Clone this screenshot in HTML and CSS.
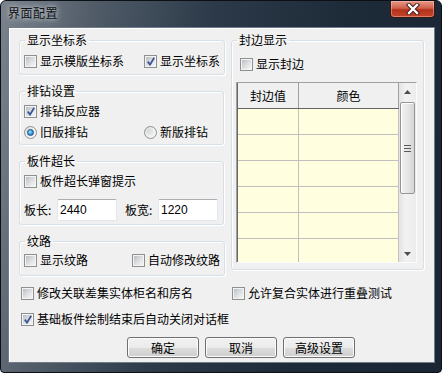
FILE: index.html
```html
<!DOCTYPE html>
<html lang="zh">

<head>
    <meta charset="UTF-8">
    <title>界面配置</title>
    <link rel="stylesheet" href="styles.css">
</head>

<body>
    <div class="window">
        <div class="titlebar">
            <span class="title">界面配置</span>
            <div class="close">
                <svg width="18" height="12" viewBox="0 0 18 12">
                    <path d="M5 2 L13 10 M13 2 L5 10" stroke="#3a1410" stroke-width="4.2" stroke-linecap="square" fill="none"/>
                    <path d="M5 2 L13 10 M13 2 L5 10" stroke="#fff" stroke-width="2.4" stroke-linecap="square" fill="none"/>
                </svg>
            </div>
        </div>
        <div class="client">
            <div class="main">
                <div class="left">
                    <fieldset class="group g1">
                        <legend>显示坐标系</legend>
                        <div class="row">
                            <label class="check w120"><span class="box"></span>显示模版坐标系</label>
                            <label class="check"><span class="box on"></span>显示坐标系</label>
                        </div>
                    </fieldset>
                    <fieldset class="group g2">
                        <legend>排钻设置</legend>
                        <div class="row">
                            <label class="check"><span class="box on"></span>排钻反应器</label>
                        </div>
                        <div class="row">
                            <label class="check w120"><span class="radio on"></span>旧版排钻</label>
                            <label class="check"><span class="radio"></span>新版排钻</label>
                        </div>
                    </fieldset>
                    <fieldset class="group g3">
                        <legend>板件超长</legend>
                        <div class="row">
                            <label class="check"><span class="box"></span>板件超长弹窗提示</label>
                        </div>
                        <div class="size-row">
                            <span class="size-label">板长:</span>
                            <input type="text" class="size" value="2440">
                            <span class="size-label">板宽:</span>
                            <input type="text" class="size" value="1220">
                        </div>
                    </fieldset>
                    <fieldset class="group g4">
                        <legend>纹路</legend>
                        <div class="row">
                            <label class="check w108"><span class="box"></span>显示纹路</label>
                            <label class="check"><span class="box"></span>自动修改纹路</label>
                        </div>
                    </fieldset>
                </div>
                <fieldset class="group edge">
                    <legend>封边显示</legend>
                    <div class="row edge-check">
                        <label class="check"><span class="box"></span>显示封边</label>
                    </div>
                    <div class="grid">
                        <div class="grid-body">
                            <table>
                                <thead>
                                    <tr>
                                        <th class="c1">封边值</th>
                                        <th class="c2">颜色</th>
                                    </tr>
                                </thead>
                                <tbody>
                                    <tr><td></td><td></td></tr>
                                    <tr><td></td><td></td></tr>
                                    <tr><td></td><td></td></tr>
                                    <tr><td></td><td></td></tr>
                                    <tr><td></td><td></td></tr>
                                    <tr><td></td><td></td></tr>
                                </tbody>
                            </table>
                        </div>
                        <div class="scrollbar">
                            <div class="arrow up"><svg width="7" height="4" viewBox="0 0 7 4"><path d="M0 4 L3.5 0 L7 4 Z" fill="#4d4d4d"/></svg></div>
                            <div class="track">
                                <div class="thumb"><span class="grip"></span></div>
                            </div>
                            <div class="arrow down"><svg width="7" height="4" viewBox="0 0 7 4"><path d="M0 0 L3.5 4 L7 0 Z" fill="#4d4d4d"/></svg></div>
                        </div>
                    </div>
                </fieldset>
            </div>
            <div class="options">
                <div class="row">
                    <label class="check w211"><span class="box"></span>修改关联差集实体柜名和房名</label>
                    <label class="check"><span class="box"></span>允许复合实体进行重叠测试</label>
                </div>
                <div class="row">
                    <label class="check"><span class="box on"></span>基础板件绘制结束后自动关闭对话框</label>
                </div>
            </div>
            <div class="buttons">
                <button class="btn">确定</button>
                <button class="btn">取消</button>
                <button class="btn">高级设置</button>
            </div>
        </div>
    </div>
</body>

</html>
```

FILE: styles.css
```css
* {
    padding: 0;
    margin: 0;
}

body {
    width: 442px;
    height: 373px;
    overflow: hidden;
    background: #fff;
    font-family: "Liberation Sans", "Noto Sans CJK SC", sans-serif;
    font-size: 12px;
    color: #000;
}

.window {
    width: 442px;
    height: 373px;
    box-sizing: border-box;
    border: 1px solid #0b1016;
    border-radius: 6px 6px 4px 4px;
    background: linear-gradient(100deg, #7a838d 0%, #525d69 18%, #2c3a49 42%, #1d2a38 70%, #1b2634 100%);
    display: flex;
    flex-direction: column;
}

.titlebar {
    height: 26px;
    display: flex;
    justify-content: space-between;
    align-items: flex-start;
}

.title {
    margin: 4px 0 0 7px;
    line-height: 16px;
    font-family: "Noto Sans CJK SC", sans-serif;
    font-size: 12px;
    letter-spacing: 0.5px;
    color: #111;
    text-shadow: 0 0 4px #c9d0d8, 0 0 8px #aeb8c2;
}

.close {
    width: 45px;
    height: 17px;
    margin-right: 6px;
    box-sizing: border-box;
    border: 1px solid #3b1712;
    border-top: none;
    border-radius: 0 0 4px 4px;
    background: linear-gradient(#e59a88 0%, #d0604a 45%, #b3321e 55%, #c4452a 100%);
    box-shadow: inset 0 0 0 1px rgba(255, 200, 190, 0.45);
    display: flex;
    align-items: center;
    justify-content: center;
}

.client {
    flex: 1;
    margin: 0 6px 9px 7px;
    box-sizing: border-box;
    background: #f0f0f0;
    border: 1px solid #6f7c89;
    box-shadow: inset 1px 1px 0 #ffffff;
    padding: 5px 10px 0 10px;
    display: flex;
    flex-direction: column;
}

.main {
    display: flex;
    gap: 7px;
}

.left {
    width: 205px;
    display: flex;
    flex-direction: column;
    gap: 9px;
}

.group {
    box-sizing: border-box;
    border: 1px solid #d5dfe5;
    border-radius: 3px;
    box-shadow: inset 1px 1px 0 #fff, 1px 1px 0 #fff;
    padding: 0 4px;
}

.group legend {
    margin-left: 1px;
    padding: 0 2px;
    line-height: 14px;
    font-family: "Noto Sans CJK SC", sans-serif;
}

.g1 {
    height: 42px;
    padding-top: 7px;
}

.g2 {
    height: 61px;
    padding-top: 6px;
}

.g2 .row + .row {
    margin-top: 7px;
}

.g3 {
    height: 71px;
    padding-top: 6px;
}

.g4 {
    height: 42px;
    padding-top: 5px;
}

.edge {
    width: 193px;
    height: 237px;
    padding-top: 10px;
}

.row {
    display: flex;
    align-items: center;
    height: 14px;
}

.check {
    display: flex;
    align-items: center;
    line-height: 14px;
    font-family: "Noto Sans CJK SC", sans-serif;
    white-space: nowrap;
}

.w120 {
    width: 120px;
}

.w108 {
    width: 108px;
}

.w211 {
    width: 211px;
}

.box {
    position: relative;
    width: 13px;
    height: 13px;
    box-sizing: border-box;
    margin-right: 3px;
    border: 1px solid #8e8f8f;
    background: #f4f4f4;
}

.box::before {
    content: "";
    position: absolute;
    left: 1px;
    top: 1px;
    width: 9px;
    height: 9px;
    background: linear-gradient(135deg, #b9bdc2 0%, #dcdee1 50%, #f5f5f5 100%);
}

.box.on::after {
    content: "";
    position: absolute;
    left: 2px;
    top: 1px;
    width: 8px;
    height: 9px;
    background: url("data:image/svg+xml;utf8,<svg xmlns='http://www.w3.org/2000/svg' width='8' height='9' viewBox='0 0 8 9'><path d='M0.8 4.6 L3 7.6 L7.2 0.8' stroke='%233d5699' stroke-width='1.8' fill='none'/></svg>") no-repeat;
}

.radio {
    position: relative;
    width: 13px;
    height: 13px;
    box-sizing: border-box;
    margin-right: 3px;
    border: 1px solid #8e8f8f;
    border-radius: 50%;
    background: radial-gradient(circle at 35% 35%, #d5d7da, #f6f6f6 70%);
}

.radio.on::after {
    content: "";
    position: absolute;
    left: 2px;
    top: 2px;
    width: 7px;
    height: 7px;
    box-sizing: border-box;
    border-radius: 50%;
    border: 1px solid #1e4f86;
    background: radial-gradient(circle at 40% 40%, #b9f0ff 0%, #3ea2e6 45%, #1b5fa4 100%);
}

.size-row {
    display: flex;
    align-items: center;
    margin-top: 11px;
}

.size-label {
    width: 33px;
    line-height: 14px;
    font-family: "Noto Sans CJK SC", sans-serif;
}

.size-label + .size + .size-label {
    margin-left: 8px;
}

.size {
    width: 60px;
    height: 22px;
    box-sizing: border-box;
    border: 1px solid #e2e7ed;
    border-top-color: #abadb3;
    border-radius: 2px;
    padding-left: 2px;
    font-family: "Liberation Sans", sans-serif;
    font-size: 12px;
    outline: none;
    background: #fff;
}

.edge-check {
    padding-left: 4px;
}

.grid {
    width: 181px;
    height: 181px;
    margin-top: 11px;
    box-sizing: border-box;
    border: 1px solid;
    border-color: #a0a0a0 #fdfdfd #fdfdfd #a0a0a0;
    box-shadow: inset 1px 0 0 #696969;
    display: flex;
}

.grid-body {
    width: 162px;
    height: 179px;
    overflow: hidden;
    padding-left: 1px;
    box-sizing: border-box;
}

table {
    border-collapse: collapse;
    table-layout: fixed;
    background: #ffffe0;
}

th,
td {
    height: 25px;
    border-right: 1px solid #c0c0c0;
    border-bottom: 1px solid #c0c0c0;
    padding: 0;
}

th {
    background: #f0f0f0;
    font-weight: normal;
    font-family: "Noto Sans CJK SC", sans-serif;
    border-right-color: #a0a0a0;
    border-bottom-color: #646464;
}

.c1 {
    width: 60px;
}

.c2 {
    width: 99px;
}

.scrollbar {
    width: 17px;
    height: 179px;
    display: flex;
    flex-direction: column;
    background: linear-gradient(90deg, #e3e3e3, #f2f2f2 40%, #ececec);
}

.arrow {
    height: 17px;
    display: flex;
    align-items: center;
    justify-content: center;
}

.track {
    flex: 1;
    padding: 2px 0;
}

.thumb {
    height: 92px;
    margin: 0 1px;
    box-sizing: border-box;
    border: 1px solid #959595;
    border-radius: 2px;
    background: linear-gradient(90deg, #f2f2f2, #e6e6e6 50%, #d6d6d6);
    box-shadow: inset 1px 1px 0 #fff;
    display: flex;
    align-items: center;
    justify-content: center;
}

.grip {
    width: 7px;
    height: 7px;
    background: repeating-linear-gradient(#5a5a5a 0, #5a5a5a 1px, transparent 1px, transparent 3px);
}

.options {
    margin-top: 10px;
    padding-left: 2px;
}

.options .row + .row {
    margin-top: 12px;
}

.buttons {
    display: flex;
    gap: 6px;
    margin-top: 11px;
    padding-left: 108px;
}

.btn {
    width: 72px;
    height: 21px;
    border: 1px solid #707070;
    border-radius: 3px;
    background: linear-gradient(#f2f2f2 0%, #ebebeb 50%, #dddddd 51%, #cfcfcf 100%);
    box-shadow: inset 0 0 0 1px #fcfcfc;
    font-family: "Noto Sans CJK SC", sans-serif;
    font-size: 12px;
    color: #000;
}
```
